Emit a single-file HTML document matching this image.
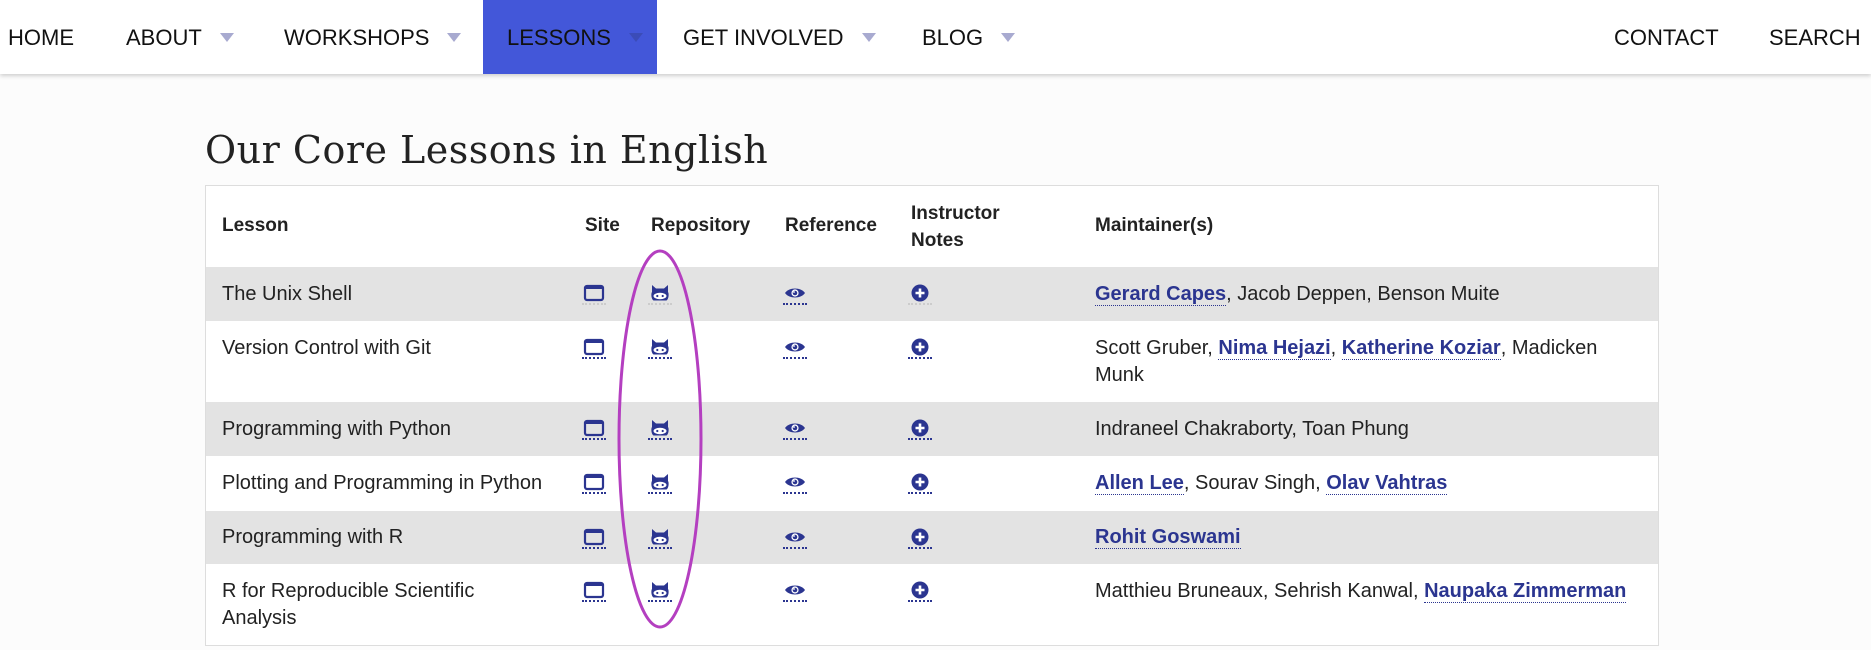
<!DOCTYPE html>
<html><head><meta charset="utf-8"><style>
*{margin:0;padding:0;box-sizing:border-box}
body{width:1871px;height:650px;overflow:hidden;background:#fcfcfc;font-family:"Liberation Sans",sans-serif;color:#222;position:relative}
.nav{position:absolute;left:0;top:0;width:1871px;height:74px;background:#fff;box-shadow:0 2px 4px rgba(0,0,0,.18)}
.ni{position:absolute;top:0;height:74px;line-height:76px;font-size:22px;color:#111;white-space:nowrap}
.car{display:inline-block;width:0;height:0;border-left:7px solid transparent;border-right:7px solid transparent;border-top:9px solid #a8aad0;margin-left:18px;vertical-align:middle;position:relative;top:-2px}
.act{background:#4357d9}
.act .car{border-top-color:#3b4cb8}
h1{position:absolute;left:205px;top:128px;font-family:"DejaVu Serif","Liberation Serif",serif;font-weight:normal;font-size:38px;color:#222;letter-spacing:0.5px}
.tbl{position:absolute;left:205px;top:185px;width:1454px;height:461px;background:#fff;border:1px solid #ddd}
.row{position:absolute;left:0;width:1452px}
.g{background:#e3e3e3}
.c{position:absolute;font-size:20px;line-height:27px;color:#222}
.h{font-weight:bold;font-size:19px}
a{color:#2b3590;font-weight:bold;text-decoration:none;border-bottom:1px dotted #2b3590}
.ic{position:absolute;width:24px;height:22px;border-bottom:2px dotted #2b3590}
.ic.f{border-bottom-color:#ccc}
svg{display:block}
</style></head><body>
<div class="nav">
<div class="ni" style="left:8px">HOME</div>
<div class="ni" style="left:126px">ABOUT<span class="car"></span></div>
<div class="ni" style="left:284px">WORKSHOPS<span class="car"></span></div>
<div class="ni act" style="left:483px;width:174px;padding-left:24px">LESSONS<span class="car"></span></div>
<div class="ni" style="left:683px">GET INVOLVED<span class="car"></span></div>
<div class="ni" style="left:922px">BLOG<span class="car"></span></div>
<div class="ni" style="left:1614px">CONTACT</div>
<div class="ni" style="left:1769px">SEARCH</div>
</div>
<h1>Our Core Lessons in English</h1>
<div class="tbl">
<div class="c h" style="left:16px;top:26px">Lesson</div>
<div class="c h" style="left:379px;top:26px">Site</div>
<div class="c h" style="left:445px;top:26px">Repository</div>
<div class="c h" style="left:579px;top:26px">Reference</div>
<div class="c h" style="left:705px;top:14px">Instructor<br>Notes</div>
<div class="c h" style="left:889px;top:26px">Maintainer(s)</div>

<div class="row g" style="top:81px;height:54px"></div>
<div class="row" style="top:135px;height:81px"></div>
<div class="row g" style="top:216px;height:54px"></div>
<div class="row" style="top:270px;height:55px"></div>
<div class="row g" style="top:325px;height:53px"></div>
<div class="row" style="top:378px;height:82px"></div>

<div class="c" style="left:16px;top:95px">The Unix Shell</div>
<div class="c" style="left:16px;top:149px">Version Control with Git</div>
<div class="c" style="left:16px;top:230px">Programming with Python</div>
<div class="c" style="left:16px;top:284px">Plotting and Programming in Python</div>
<div class="c" style="left:16px;top:338px">Programming with R</div>
<div class="c" style="left:16px;top:392px">R for Reproducible Scientific<br>Analysis</div>

<div class="c" style="left:889px;top:95px"><a>Gerard Capes</a>, Jacob Deppen, Benson Muite</div>
<div class="c" style="left:889px;top:149px;width:540px">Scott Gruber, <a>Nima Hejazi</a>, <a>Katherine Koziar</a>, Madicken Munk</div>
<div class="c" style="left:889px;top:230px">Indraneel Chakraborty, Toan Phung</div>
<div class="c" style="left:889px;top:284px"><a>Allen Lee</a>, Sourav Singh, <a>Olav Vahtras</a></div>
<div class="c" style="left:889px;top:338px"><a>Rohit Goswami</a></div>
<div class="c" style="left:889px;top:392px">Matthieu Bruneaux, Sehrish Kanwal, <a>Naupaka Zimmerman</a></div>
</div>

<div id="icons"></div>
<script>
var tops=[283,337,418,472,527,580];
var site='<svg width="24" height="20" viewBox="0 0 24 20"><rect x="3" y="3" width="18" height="14" rx="2" fill="none" stroke="#2b3590" stroke-width="2.2"/><rect x="3" y="3" width="18" height="3" fill="#2b3590"/></svg>';
var gh='<svg width="24" height="20" viewBox="0 0 24 20"><path d="M4 2 L8 5.5 H16 L20 2 V9 C21 10 21 16 18.5 17.5 H5.5 C3 16 3 10 4 9 Z" fill="#2b3590"/><ellipse cx="12" cy="13" rx="6.5" ry="3.2" fill="#fff"/><circle cx="9.3" cy="13" r="1.1" fill="#2b3590"/><circle cx="14.7" cy="13" r="1.1" fill="#2b3590"/></svg>';
var eye='<svg width="24" height="20" viewBox="0 0 24 20"><path d="M2 10 C6 4 18 4 22 10 C18 16 6 16 2 10Z" fill="#2b3590"/><circle cx="12" cy="10" r="3.6" fill="#fff"/><circle cx="12" cy="10" r="2.3" fill="#2b3590"/><circle cx="11" cy="9" r=".9" fill="#fff"/></svg>';
var plus='<svg width="24" height="20" viewBox="0 0 24 20"><circle cx="12" cy="10" r="8.5" fill="#2b3590"/><path d="M12 5.5V14.5M7.5 10H16.5" stroke="#fff" stroke-width="2.6"/></svg>';
var h='';
tops.forEach(function(t,i){var f=(i==0)?' f':'';
h+='<div class="ic'+f+'" style="left:582px;top:'+t+'px">'+site+'</div>';
h+='<div class="ic'+f+'" style="left:648px;top:'+t+'px">'+gh+'</div>';
h+='<div class="ic" style="left:783px;top:'+t+'px">'+eye+'</div>';
h+='<div class="ic'+f+'" style="left:908px;top:'+t+'px">'+plus+'</div>';});
document.getElementById('icons').innerHTML=h;
</script>
<svg style="position:absolute;left:0;top:0" width="1871" height="650"><ellipse cx="660" cy="439" rx="41" ry="188" fill="none" stroke="#b43fc0" stroke-width="3"/></svg>
</body></html>
